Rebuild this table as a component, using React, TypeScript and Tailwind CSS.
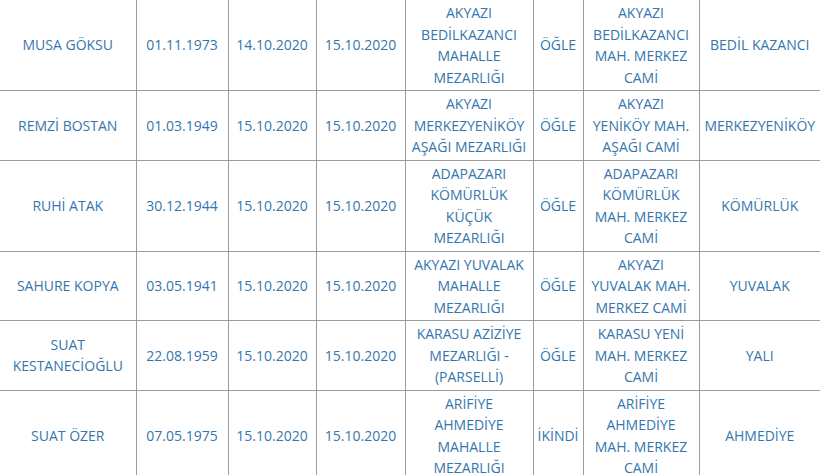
const widths = [136, 92, 88, 89, 128, 50, 116, 121];

type Row = string[][];

const rows: Row[] = [
  [
    ["MUSA GÖKSU"],
    ["01.11.1973"],
    ["14.10.2020"],
    ["15.10.2020"],
    ["AKYAZI", "BEDİLKAZANCI", "MAHALLE", "MEZARLIĞI"],
    ["ÖĞLE"],
    ["AKYAZI", "BEDİLKAZANCI", "MAH. MERKEZ", "CAMİ"],
    ["BEDİL KAZANCI"],
  ],
  [
    ["REMZİ BOSTAN"],
    ["01.03.1949"],
    ["15.10.2020"],
    ["15.10.2020"],
    ["AKYAZI", "MERKEZYENİKÖY", "AŞAĞI MEZARLIĞI"],
    ["ÖĞLE"],
    ["AKYAZI", "YENİKÖY MAH.", "AŞAĞI CAMİ"],
    ["MERKEZYENİKÖY"],
  ],
  [
    ["RUHİ ATAK"],
    ["30.12.1944"],
    ["15.10.2020"],
    ["15.10.2020"],
    ["ADAPAZARI", "KÖMÜRLÜK", "KÜÇÜK", "MEZARLIĞI"],
    ["ÖĞLE"],
    ["ADAPAZARI", "KÖMÜRLÜK", "MAH. MERKEZ", "CAMİ"],
    ["KÖMÜRLÜK"],
  ],
  [
    ["SAHURE KOPYA"],
    ["03.05.1941"],
    ["15.10.2020"],
    ["15.10.2020"],
    ["AKYAZI YUVALAK", "MAHALLE", "MEZARLIĞI"],
    ["ÖĞLE"],
    ["AKYAZI", "YUVALAK MAH.", "MERKEZ CAMİ"],
    ["YUVALAK"],
  ],
  [
    ["SUAT", "KESTANECİOĞLU"],
    ["22.08.1959"],
    ["15.10.2020"],
    ["15.10.2020"],
    ["KARASU AZİZİYE", "MEZARLIĞI -", "(PARSELLİ)"],
    ["ÖĞLE"],
    ["KARASU YENİ", "MAH. MERKEZ", "CAMİ"],
    ["YALI"],
  ],
  [
    ["SUAT ÖZER"],
    ["07.05.1975"],
    ["15.10.2020"],
    ["15.10.2020"],
    ["ARİFİYE", "AHMEDİYE", "MAHALLE", "MEZARLIĞI"],
    ["İKİNDİ"],
    ["ARİFİYE", "AHMEDİYE", "MAH. MERKEZ", "CAMİ"],
    ["AHMEDİYE"],
  ],
];

export default function App() {
  return (
    <div
      className="w-[820px] h-[475px] overflow-hidden bg-white"
      style={{ fontFamily: '"Open Sans", "DejaVu Sans", sans-serif' }}
    >
      <table className="table-fixed border-collapse w-[820px] text-[14px] leading-[21.5px] text-[#3576ad]">
        <colgroup>
          {widths.map((w, i) => (
            <col key={i} style={{ width: w }} />
          ))}
        </colgroup>
        <tbody>
          {rows.map((row, r) => (
            <tr key={r}>
              {row.map((lines, c) => (
                <td
                  key={c}
                  className={
                    "text-center align-middle py-[2px] px-0 border-b border-[#9c9c9c] " +
                    (c > 0 ? "border-l" : "")
                  }
                >
                  {lines.map((l, k) => (
                    <div key={k} className="whitespace-nowrap">
                      {l}
                    </div>
                  ))}
                </td>
              ))}
            </tr>
          ))}
        </tbody>
      </table>
    </div>
  );
}
